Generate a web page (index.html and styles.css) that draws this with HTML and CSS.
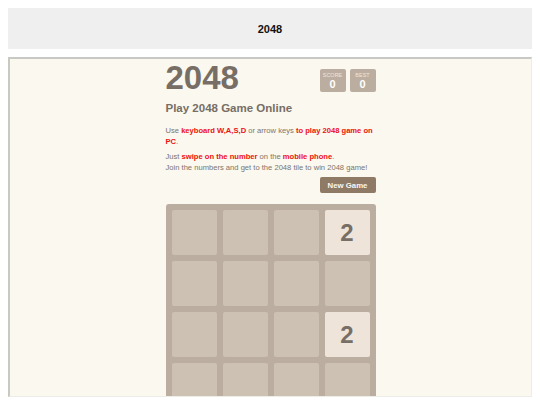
FILE: index.html
```html
<!DOCTYPE html>
<html>
<head>
<meta charset="utf-8">
<link rel="stylesheet" href="styles.css">
</head>
<body>
<header class="topbar">2048</header>
<main class="panel">
  <div class="game">
    <div class="heading">
      <h1 class="title">2048</h1>
      <div class="scores">
        <div class="score-box"><span class="label">SCORE</span><span class="value">0</span></div>
        <div class="score-box"><span class="label">BEST</span><span class="value">0</span></div>
      </div>
    </div>
    <h2 class="subtitle">Play 2048 Game Online</h2>
    <p class="info">Use <b>keyboard W,A,S,D</b> or arrow keys <b>to play 2048 game on<br>PC</b>.</p>
    <p class="info">Just <b>swipe on the number</b> on the <b>mobile phone</b>.<br>Join the numbers and get to the 2048 tile to win 2048 game!</p>
    <div class="actions"><button class="new-game">New Game</button></div>
    <div class="board">
      <div class="cell"></div><div class="cell"></div><div class="cell"></div><div class="cell tile-2">2</div>
      <div class="cell"></div><div class="cell"></div><div class="cell"></div><div class="cell"></div>
      <div class="cell"></div><div class="cell"></div><div class="cell"></div><div class="cell tile-2">2</div>
      <div class="cell"></div><div class="cell"></div><div class="cell"></div><div class="cell"></div>
    </div>
  </div>
</main>
</body>
</html>
```

FILE: styles.css
```css
html, body {
  margin: 0;
  padding: 0;
}
body {
  margin: 8px;
  font-family: "Liberation Sans", Arial, sans-serif;
  background: #fff;
}
.topbar {
  height: 41px;
  background: #efefef;
  display: flex;
  align-items: center;
  justify-content: center;
  font-size: 11px;
  font-weight: bold;
  color: #111;
}
.panel {
  margin-top: 8px;
  height: 337px;
  overflow: hidden;
  background: #faf8ef;
  border-top: 2px solid #c9c9c4;
  border-left: 2px solid #c9c9c4;
  border-right: 1px solid #eeece6;
  border-bottom: 1px solid #eeece6;
  box-sizing: content-box;
}
.game {
  width: 210px;
  margin: 0 auto;
  padding-top: 2px;
}
.heading {
  display: flex;
  justify-content: space-between;
  align-items: flex-start;
}
.title {
  margin: 0;
  font-size: 33px;
  line-height: 34px;
  font-weight: bold;
  color: #776e65;
}
.scores {
  display: flex;
  gap: 4px;
  margin-top: 8px;
}
.score-box {
  width: 26px;
  height: 23px;
  background: #bbada0;
  border-radius: 2px;
  display: flex;
  flex-direction: column;
  align-items: center;
  color: #fff;
}
.label {
  font-size: 5.5px;
  color: #efe6dc;
  margin-top: 3px;
  line-height: 7px;
}
.value {
  font-size: 11px;
  font-weight: bold;
  line-height: 11px;
}
.subtitle {
  margin: 6px 0 0;
  font-size: 11.5px;
  line-height: 14px;
  color: #776e65;
}
.info {
  margin: 10px 0 0;
  font-size: 7.6px;
  line-height: 11px;
  color: #7d746b;
  white-space: nowrap;
}
.info + .info {
  margin-top: 4px;
}
.info b {
  color: #ee1111;
}
.actions {
  display: flex;
  justify-content: flex-end;
  margin-top: 4px;
}
.new-game {
  width: 56px;
  height: 16px;
  padding: 0;
  border: 0;
  border-radius: 2px;
  background: #8f7a66;
  color: #f9f6f2;
  font-family: "Liberation Sans", Arial, sans-serif;
  font-size: 7.8px;
  font-weight: bold;
}
.board {
  margin-top: 11px;
  width: 210px;
  padding: 6px;
  box-sizing: border-box;
  background: #bbada0;
  border-radius: 3px;
  display: grid;
  grid-template-columns: repeat(4, 45px);
  grid-auto-rows: 45px;
  gap: 6px;
}
.cell {
  background: #cdc1b4;
  border-radius: 2px;
  display: flex;
  align-items: center;
  justify-content: center;
  font-size: 24px;
  font-weight: bold;
  color: #776e65;
}
.tile-2 {
  background: #eee4da;
}
```
